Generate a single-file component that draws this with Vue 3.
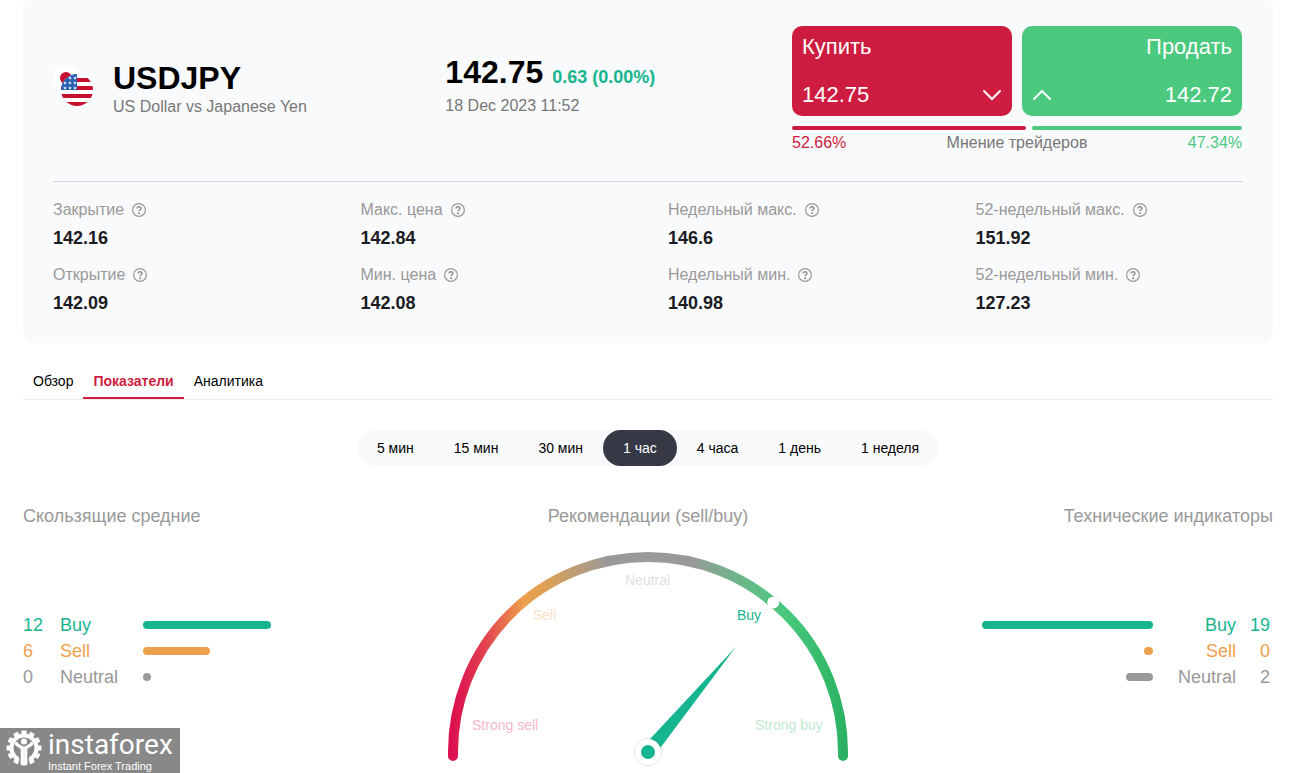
<script setup>
import { ref } from 'vue'

const stats = [
  { label: 'Закрытие', value: '142.16' },
  { label: 'Макс. цена', value: '142.84' },
  { label: 'Недельный макс.', value: '146.6' },
  { label: '52-недельный макс.', value: '151.92' },
  { label: 'Открытие', value: '142.09' },
  { label: 'Мин. цена', value: '142.08' },
  { label: 'Недельный мин.', value: '140.98' },
  { label: '52-недельный мин.', value: '127.23' }
]

const tabs = ['Обзор', 'Показатели', 'Аналитика']
const activeTab = ref('Показатели')

const periods = ['5 мин', '15 мин', '30 мин', '1 час', '4 часа', '1 день', '1 неделя']
const activePeriod = ref('1 час')

const averages = [
  { kind: 'buy', label: 'Buy', count: 12, bar: 128 },
  { kind: 'sell', label: 'Sell', count: 6, bar: 67 },
  { kind: 'neutral', label: 'Neutral', count: 0, bar: 8 }
]
const indicators = [
  { kind: 'buy', label: 'Buy', count: 19, bar: 171 },
  { kind: 'sell', label: 'Sell', count: 0, bar: 9 },
  { kind: 'neutral', label: 'Neutral', count: 2, bar: 27 }
]

const buyers = 52.66
const sellers = 47.34

const stars = [
  [65, 78], [70, 78], [75, 78],
  [65, 83], [70, 83], [75, 83],
  [65, 88], [70, 88], [75, 88]
]
const teeth = Array.from({ length: 12 }, (_, i) => i * 30)
</script>

<template>
  <main class="page">
    <section class="card">
      <header class="head">
        <div class="pair">
          <svg class="flag" viewBox="53 65 40 41" aria-hidden="true">
            <defs>
              <clipPath id="us-disc"><circle cx="77" cy="90" r="16" /></clipPath>
            </defs>
            <circle cx="66" cy="78" r="13" fill="#fff" />
            <circle cx="66" cy="78" r="6" fill="#c5102f" />
            <g clip-path="url(#us-disc)">
              <rect x="61" y="74" width="32" height="32" fill="#fff" />
              <rect x="61" y="78" width="32" height="4" fill="#c5102f" />
              <rect x="61" y="86" width="32" height="4" fill="#c5102f" />
              <rect x="61" y="94" width="32" height="4" fill="#c5102f" />
              <rect x="61" y="102" width="32" height="4" fill="#c5102f" />
              <rect x="61" y="74" width="16" height="16" fill="#2a62b4" />
              <path
                v-for="([x, y], i) in stars"
                :key="i"
                :transform="`translate(${x} ${y})`"
                d="M0-1.9.5-.6 1.8-.6.8.3 1.1 1.6 0 .8-1.1 1.6-.8.3-1.8-.6-.5-.6Z"
                fill="#fff"
              />
            </g>
          </svg>
          <div>
            <h1>USDJPY</h1>
            <p class="sub">US Dollar vs Japanese Yen</p>
          </div>
        </div>

        <div class="quote">
          <p class="price">142.75 <span class="change">0.63 (0.00%)</span></p>
          <p class="sub">18 Dec 2023 11:52</p>
        </div>

        <div class="trade">
          <div class="actions">
            <button type="button" class="action buy-btn">
              <span>Купить</span>
              <span class="line">
                142.75
                <svg width="20" height="12" viewBox="0 0 20 12" aria-hidden="true">
                  <path d="M2 2l8 8 8-8" />
                </svg>
              </span>
            </button>
            <button type="button" class="action sell-btn">
              <span>Продать</span>
              <span class="line">
                <svg width="20" height="12" viewBox="0 0 20 12" aria-hidden="true">
                  <path d="M2 10l8-8 8 8" />
                </svg>
                142.72
              </span>
            </button>
          </div>
          <div class="split">
            <span class="split-buy" :style="{ flexGrow: buyers }"></span>
            <span class="split-sell" :style="{ flexGrow: sellers }"></span>
          </div>
          <div class="opinion">
            <span class="red">{{ buyers }}%</span>
            <span>Мнение трейдеров</span>
            <span class="green">{{ sellers }}%</span>
          </div>
        </div>
      </header>

      <dl class="stats">
        <div v-for="s in stats" :key="s.label">
          <dt>
            {{ s.label }}
            <svg width="14" height="14" viewBox="0 0 14 14" aria-hidden="true">
              <circle cx="7" cy="7" r="6.4" fill="none" stroke="#999" stroke-width="1.2" />
              <path d="M5 5.5C5.1 3.3 9 3.3 8.9 5.4 8.9 6.8 7.1 6.7 7.1 8.3" fill="none" stroke="#8f8f8f" stroke-width="1.5" />
              <circle cx="7.1" cy="10.2" r="1" fill="#8f8f8f" />
            </svg>
          </dt>
          <dd>{{ s.value }}</dd>
        </div>
      </dl>
    </section>

    <nav class="tabs">
      <button
        v-for="t in tabs"
        :key="t"
        type="button"
        class="tab"
        :class="{ active: t === activeTab }"
        @click="activeTab = t"
      >{{ t }}</button>
    </nav>

    <div class="periods">
      <button
        v-for="p in periods"
        :key="p"
        type="button"
        class="period"
        :class="{ active: p === activePeriod }"
        @click="activePeriod = p"
      >{{ p }}</button>
    </div>

    <section class="summary">
      <div>
        <h2>Скользящие средние</h2>
        <ul class="votes">
          <li v-for="v in averages" :key="v.kind" :class="v.kind">
            <span class="count">{{ v.count }}</span>
            <span class="name">{{ v.label }}</span>
            <span class="bar" :style="{ width: v.bar + 'px' }"></span>
          </li>
        </ul>
      </div>

      <div class="center">
        <h2>Рекомендации (sell/buy)</h2>
        <svg class="gauge" viewBox="438 546 420 227" role="img" aria-label="Buy">
          <defs>
            <linearGradient id="scale" gradientUnits="userSpaceOnUse" x1="448" y1="0" x2="848" y2="0">
              <stop offset="0" stop-color="#dc0c50" />
              <stop offset=".04" stop-color="#de1f4f" />
              <stop offset=".1" stop-color="#e2494f" />
              <stop offset=".19" stop-color="#eda04b" />
              <stop offset=".25" stop-color="#dba056" />
              <stop offset=".4" stop-color="#999" />
              <stop offset=".61" stop-color="#999" />
              <stop offset=".7" stop-color="#75b18d" />
              <stop offset=".84" stop-color="#49c97e" />
              <stop offset=".92" stop-color="#39bd6f" />
              <stop offset="1" stop-color="#2bb063" />
            </linearGradient>
            <filter id="soft" x="-50%" y="-50%" width="200%" height="200%">
              <feDropShadow dx="0" dy="0" stdDeviation="1" flood-color="#000" flood-opacity=".25" />
            </filter>
          </defs>
          <path d="M453 756V752A195 195 0 0 1 843 752V756" fill="none" stroke="url(#scale)" stroke-width="10" stroke-linecap="round" />
          <circle cx="773.3" cy="602.6" r="6" fill="#fff" filter="url(#soft)" />
          <path d="M735.8 647L642.3 747.2 653.7 756.8Z" fill="#17b58f" />
          <circle cx="648" cy="752" r="13" fill="#fff" filter="url(#soft)" />
          <circle cx="648" cy="752" r="7" fill="#17b58f" />
          <text x="472" y="730" fill="#f6b6cb">Strong sell</text>
          <text x="533" y="620" fill="#fae1c5">Sell</text>
          <text x="625" y="585" fill="#e0e0e0">Neutral</text>
          <text x="737" y="620" fill="#17b58f">Buy</text>
          <text x="755" y="730" fill="#bfe8cf">Strong buy</text>
        </svg>
      </div>

      <div class="right">
        <h2>Технические индикаторы</h2>
        <ul class="votes mirrored">
          <li v-for="v in indicators" :key="v.kind" :class="v.kind">
            <span class="count">{{ v.count }}</span>
            <span class="name">{{ v.label }}</span>
            <span class="bar" :style="{ width: v.bar + 'px' }"></span>
          </li>
        </ul>
      </div>
    </section>

    <aside class="brand">
      <svg width="36" height="36" viewBox="-18 -18 36 36" aria-hidden="true">
        <rect v-for="a in teeth" :key="a" x="-2.6" y="-17.5" width="5.2" height="6" rx="1" fill="#fff" :transform="`rotate(${a})`" />
        <circle r="12.5" fill="none" stroke="#fff" stroke-width="4" />
        <path d="M-4.2 9V18M4.2 9V18" fill="none" stroke="#888" stroke-width="1.8" />
        <circle cy="-6.5" r="3" fill="#fff" />
        <path d="M-8.5-5.5C-7-2.5-4.5-1.4-1.7-.2V17M8.5-5.5C7-2.5 4.5-1.4 1.7-.2V17" fill="none" stroke="#fff" stroke-width="3.2" />
      </svg>
      <div>
        <p class="brand-name">instaforex</p>
        <p class="brand-tag">Instant Forex Trading</p>
      </div>
    </aside>
  </main>
</template>

<style>
body {
  background: #fff;
}
</style>

<style scoped>
.page {
  height: 100vh;
  overflow: hidden;
  display: flex;
  flex-direction: column;
  box-sizing: border-box;
  padding: 0 30px 0 23px;
  font-family: "Liberation Sans", Arial, sans-serif;
  color: #000;
}
h1, h2, p, dl, dd, ul {
  margin: 0;
  padding: 0;
}
button {
  border: 0;
  padding: 0;
  background: none;
  font: inherit;
  color: inherit;
  cursor: pointer;
}
.card {
  margin-top: -4px;
  padding: 30px 30px 29px;
  border-radius: 12px;
  background: #f9fafc;
}
.head {
  display: grid;
  grid-template-columns: 33% 1fr 450px;
  padding: 0 1px 28px 0;
  border-bottom: 1px solid #cdd2dc;
}
.pair {
  display: flex;
  gap: 20px;
  padding-top: 34px;
}
.flag {
  width: 40px;
  height: 41px;
  margin-top: 5px;
}
h1 {
  margin-bottom: 1px;
  font-size: 32px;
  line-height: 36px;
}
.sub {
  font-size: 16px;
  line-height: 20px;
  color: #777;
}
.quote {
  padding-top: 28px;
}
.price {
  margin-bottom: 6px;
  font-size: 32px;
  line-height: 36px;
  font-weight: bold;
}
.change {
  font-size: 18px;
  line-height: 20px;
  color: #17b58f;
}
.actions {
  display: flex;
  gap: 10px;
}
.action {
  flex: 1;
  height: 90px;
  padding: 8px 10px;
  border-radius: 10px;
  display: flex;
  flex-direction: column;
  justify-content: space-between;
  font-size: 22px;
  line-height: 26px;
  color: #fff;
}
.action svg {
  fill: none;
  stroke: #fff;
  stroke-width: 2;
  stroke-linecap: round;
}
.buy-btn {
  align-items: flex-start;
  background: #ce1c40;
}
.sell-btn {
  align-items: flex-end;
  background: #4ac97f;
}
.line {
  width: 100%;
  display: flex;
  align-items: center;
  justify-content: space-between;
}
.split {
  display: flex;
  gap: 6px;
  margin-top: 10px;
}
.split span {
  flex-basis: 0;
  height: 4px;
  border-radius: 2px;
}
.split-buy {
  background: #ce1c40;
}
.split-sell {
  background: #4ac97f;
}
.opinion {
  display: flex;
  justify-content: space-between;
  margin-top: 3px;
  font-size: 16px;
  line-height: 20px;
  color: #777;
}
.red {
  color: #ce1c40;
}
.green {
  color: #4ac97f;
}
.stats {
  display: grid;
  grid-template-columns: repeat(4, 1fr);
  gap: 16px 40px;
  padding-top: 18px;
}
dt {
  display: flex;
  align-items: center;
  gap: 8px;
  font-size: 16px;
  line-height: 20px;
  color: #999;
}
dd {
  margin-top: 7px;
  font-size: 18px;
  line-height: 22px;
  font-weight: bold;
  color: #1b1c22;
}
.tabs {
  display: flex;
  margin-top: 20px;
  border-bottom: 1px solid #e9edf0;
}
.tab {
  height: 36px;
  padding: 0 10px;
  border-top: 2px solid transparent;
  border-bottom: 2px solid transparent;
  font-size: 14px;
}
.tab.active {
  border-bottom-color: #ce1c40;
  font-weight: bold;
  color: #ce1c40;
}
.periods {
  display: flex;
  align-self: center;
  margin-top: 30px;
  border-radius: 18px;
  background: #f9fafc;
}
.period {
  height: 36px;
  padding: 0 20px;
  border-radius: 18px;
  font-size: 14px;
}
.period.active {
  background: #363845;
  color: #fff;
}
.summary {
  display: grid;
  grid-template-columns: 1fr 420px 1fr;
  margin-top: 40px;
}
h2 {
  font-size: 18px;
  line-height: 20px;
  font-weight: normal;
  color: #999;
}
.center {
  text-align: center;
}
.right {
  text-align: right;
}
.gauge {
  display: block;
  width: 100%;
  margin-top: 20px;
}
.gauge text {
  font-size: 14px;
}
.votes {
  margin-top: 86px;
  list-style: none;
  font-size: 18px;
  line-height: 26px;
}
.votes li {
  display: flex;
  align-items: center;
}
.mirrored li {
  flex-direction: row-reverse;
}
.count {
  width: 37px;
}
.name {
  width: 83px;
}
.bar {
  height: 8px;
  border-radius: 4px;
  background: currentColor;
}
.mirrored {
  padding-right: 3px;
}
.mirrored .count {
  width: 34px;
}
.buy {
  color: #17b58f;
}
.sell {
  color: #eda04b;
}
.neutral {
  color: #999;
}
.brand {
  position: fixed;
  left: 0;
  bottom: 0;
  display: flex;
  gap: 6px;
  box-sizing: border-box;
  width: 180px;
  height: 45px;
  padding: 2px 6px;
  background: #888;
  color: #fff;
}
.brand svg {
  flex: none;
}
.brand-name {
  font-family: Roboto, sans-serif;
  font-size: 28px;
  line-height: 30px;
}
.brand-tag {
  font-size: 11px;
  line-height: 12px;
}
</style>
